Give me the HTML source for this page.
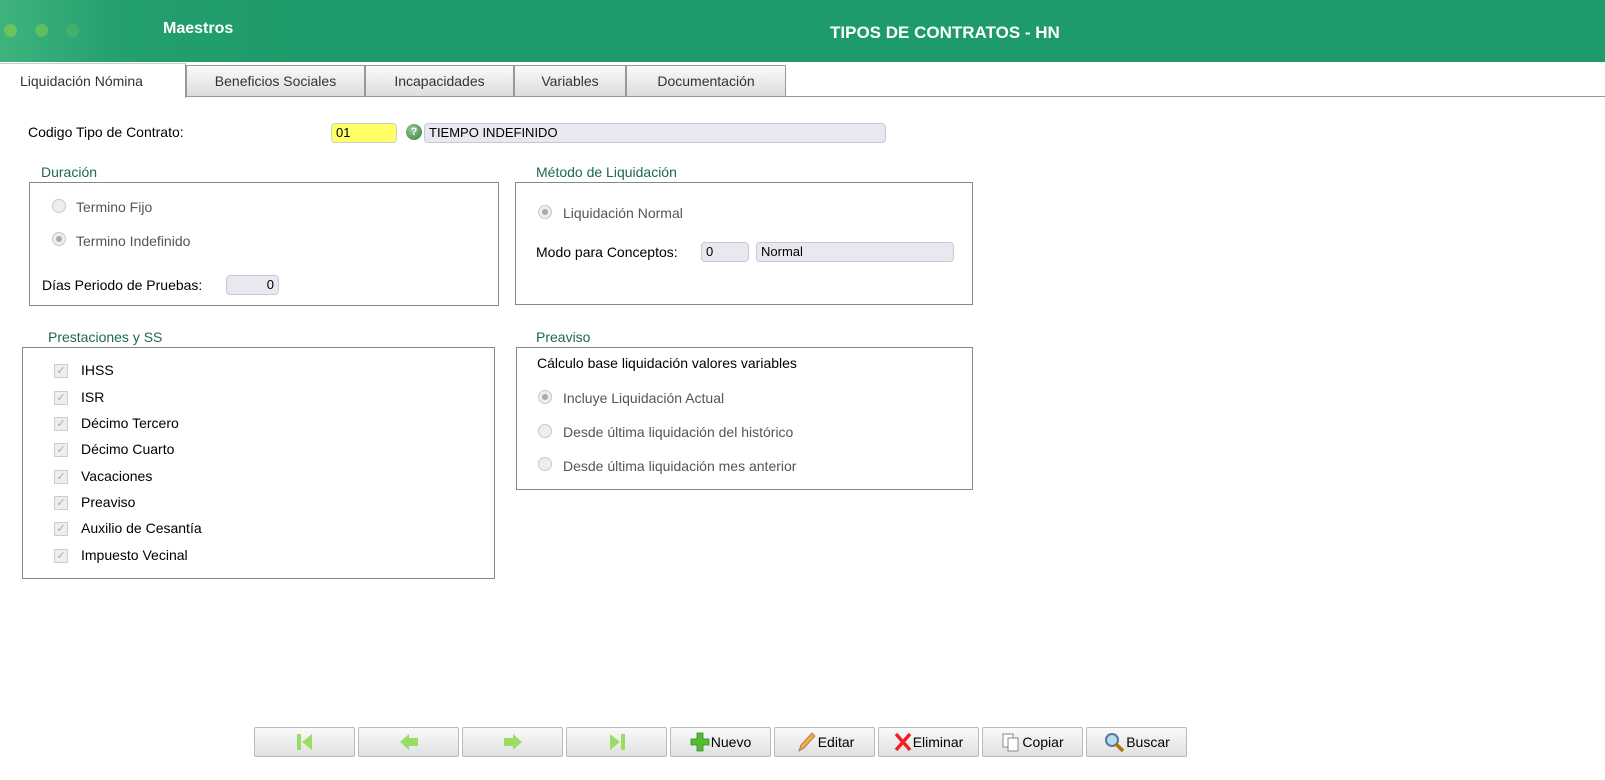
<!DOCTYPE html>
<html><head><meta charset="utf-8"><style>
*{box-sizing:border-box;margin:0;padding:0}
body{width:1605px;height:780px;background:#fff;font-family:"Segoe UI","Liberation Sans",sans-serif;font-size:14px;color:#000;position:relative;overflow:hidden}
.a{position:absolute;white-space:nowrap;margin-top:2px}
.hdr{position:absolute;left:0;top:0;width:1605px;height:62px;background:linear-gradient(90deg,#3fb37e 0,#23a06d 120px,#1e9b6a 300px,#1e9b6a 100%)}
.dot{position:absolute;top:24px;width:13px;height:13px;border-radius:50%;background:#6cc25c}
.tab{position:absolute;top:65px;height:32px;border:1px solid #999;background:linear-gradient(#fafafa,#ddd);font-size:14px;color:#333;text-align:center;line-height:31px}
.box{position:absolute;border:1px solid #888}
.lg{position:absolute;color:#1e6b45;font-size:14px;margin-top:2px}
.inp{position:absolute;height:20px;border:1px solid #c8c8d0;border-radius:4px;background:#e8e8f0;font-family:"Liberation Sans",sans-serif;font-size:13px;line-height:18px;padding-left:4px}
.rad{position:absolute;width:14px;height:14px;border-radius:50%;border:1px solid #c8c8c8;background:#eee}
.rad.on::after{content:"";position:absolute;left:3px;top:3px;width:6px;height:6px;border-radius:50%;background:#aaa}
.cb{position:absolute;width:14px;height:14px;border:1px solid #ccc;background:#eee;color:#aaa;font-size:11px;line-height:12px;text-align:center}
.gray{color:#555}
.btn{position:absolute;top:727px;width:101px;height:30px;border:1px solid #bbb;border-radius:2px;background:linear-gradient(#fafafa,#e0e0e0);font-size:14px;display:flex;align-items:center;justify-content:center;gap:1px}
</style></head><body>
<div class="hdr">
<div class="dot" style="left:4px"></div><div class="dot" style="left:35px;opacity:.8"></div><div class="dot" style="left:66px;opacity:.35"></div>
<div class="a" style="left:163px;top:18px;color:#fff;font-weight:bold;font-size:16px">Maestros</div>
<div class="a" style="left:830px;top:21px;color:#fff;font-weight:bold;font-size:17px">TIPOS DE CONTRATOS - HN</div>
</div>
<div class="a" style="left:0;top:96px;width:1605px;height:1px;background:#999;margin:0"></div>
<div class="a" style="left:0;top:63px;width:186px;height:35px;background:#fff;border-right:1px solid #999;border-top:1px solid #ccc;font-size:14px;color:#333;line-height:34px;padding-left:20px;margin:0">Liquidación Nómina</div>
<div class="tab" style="left:186px;width:179px">Beneficios Sociales</div>
<div class="tab" style="left:365px;width:149px">Incapacidades</div>
<div class="tab" style="left:514px;width:112px">Variables</div>
<div class="tab" style="left:626px;width:160px">Documentación</div>

<div class="a" style="left:28px;top:122px">Codigo Tipo de Contrato:</div>
<div class="inp" style="left:331px;top:123px;width:66px;background:#ffff66;border-color:#ccc">01</div>
<div class="a" style="left:406px;top:122px;width:16px;height:16px;border-radius:50%;background:radial-gradient(circle at 40% 35%,#9c9,#3a7a3a);color:#fff;font-size:11px;font-weight:bold;text-align:center;line-height:16px">?</div>
<div class="inp" style="left:424px;top:123px;width:462px">TIEMPO INDEFINIDO</div>

<div class="lg" style="left:41px;top:162px">Duración</div>
<div class="box" style="left:29px;top:182px;width:470px;height:124px"></div>
<div class="rad" style="left:52px;top:199px"></div><div class="a gray" style="left:76px;top:197px">Termino Fijo</div>
<div class="rad on" style="left:52px;top:232px"></div><div class="a gray" style="left:76px;top:231px">Termino Indefinido</div>
<div class="a" style="left:42px;top:275px">Días Periodo de Pruebas:</div>
<div class="inp" style="left:226px;top:275px;width:53px;text-align:right;padding-right:4px">0</div>

<div class="lg" style="left:536px;top:162px">Método de Liquidación</div>
<div class="box" style="left:515px;top:182px;width:458px;height:123px"></div>
<div class="rad on" style="left:538px;top:205px"></div><div class="a gray" style="left:563px;top:203px">Liquidación Normal</div>
<div class="a" style="left:536px;top:242px">Modo para Conceptos:</div>
<div class="inp" style="left:701px;top:242px;width:48px">0</div>
<div class="inp" style="left:756px;top:242px;width:198px">Normal</div>

<div class="lg" style="left:48px;top:327px">Prestaciones y SS</div>
<div class="box" style="left:22px;top:347px;width:473px;height:232px"></div>
<div class="cb" style="left:54px;top:364px">✓</div><div class="a" style="left:81px;top:360px">IHSS</div>
<div class="cb" style="left:54px;top:391px">✓</div><div class="a" style="left:81px;top:387px">ISR</div>
<div class="cb" style="left:54px;top:417px">✓</div><div class="a" style="left:81px;top:413px">Décimo Tercero</div>
<div class="cb" style="left:54px;top:443px">✓</div><div class="a" style="left:81px;top:439px">Décimo Cuarto</div>
<div class="cb" style="left:54px;top:470px">✓</div><div class="a" style="left:81px;top:466px">Vacaciones</div>
<div class="cb" style="left:54px;top:496px">✓</div><div class="a" style="left:81px;top:492px">Preaviso</div>
<div class="cb" style="left:54px;top:522px">✓</div><div class="a" style="left:81px;top:518px">Auxilio de Cesantía</div>
<div class="cb" style="left:54px;top:549px">✓</div><div class="a" style="left:81px;top:545px">Impuesto Vecinal</div>

<div class="lg" style="left:536px;top:327px">Preaviso</div>
<div class="box" style="left:516px;top:347px;width:457px;height:143px"></div>
<div class="a" style="left:537px;top:353px">Cálculo base liquidación valores variables</div>
<div class="rad on" style="left:538px;top:390px"></div><div class="a gray" style="left:563px;top:388px">Incluye Liquidación Actual</div>
<div class="rad" style="left:538px;top:424px"></div><div class="a gray" style="left:563px;top:422px">Desde última liquidación del histórico</div>
<div class="rad" style="left:538px;top:457px"></div><div class="a gray" style="left:563px;top:456px">Desde última liquidación mes anterior</div>

<div class="btn" style="left:254px"><svg width="20" height="20"><rect x="2" y="2" width="4" height="16" fill="#9d6"/><path d="M7 10 L17 2 V18Z" fill="#9d6"/></svg></div>
<div class="btn" style="left:358px"><svg width="22" height="20"><path d="M2 10 L11 2 V6 H20 V14 H11 V18Z" fill="#9d6"/></svg></div>
<div class="btn" style="left:462px"><svg width="22" height="20"><path d="M20 10 L11 2 V6 H2 V14 H11 V18Z" fill="#9d6"/></svg></div>
<div class="btn" style="left:566px"><svg width="20" height="20"><path d="M3 2 L13 10 L3 18Z" fill="#9d6"/><rect x="14" y="2" width="4" height="16" fill="#9d6"/></svg></div>
<div class="btn" style="left:670px"><svg width="20" height="20"><path d="M7 1H13V7H19V13H13V19H7V13H1V7H7Z" fill="#5b3" stroke="#383" stroke-width=".8"/></svg>Nuevo</div>
<div class="btn" style="left:774px"><svg width="22" height="22"><path d="M4 20 L6 14 L17 2 L20 5 L9 17Z" fill="#f0b030" stroke="#a66" stroke-width=".8"/></svg>Editar</div>
<div class="btn" style="left:878px"><svg width="18" height="20"><path d="M2 2 L16 18 M16 2 L2 18" stroke="#e22" stroke-width="3.5"/></svg>Eliminar</div>
<div class="btn" style="left:982px"><svg width="20" height="20"><rect x="2" y="2" width="10" height="13" fill="#fff" stroke="#888"/><rect x="7" y="6" width="10" height="13" fill="#fff" stroke="#888"/></svg>Copiar</div>
<div class="btn" style="left:1086px"><svg width="22" height="22"><circle cx="9" cy="9" r="6" fill="#bde" stroke="#579" stroke-width="2"/><path d="M13 13 L20 20" stroke="#a70" stroke-width="3.5"/></svg>Buscar</div>
</body></html>
